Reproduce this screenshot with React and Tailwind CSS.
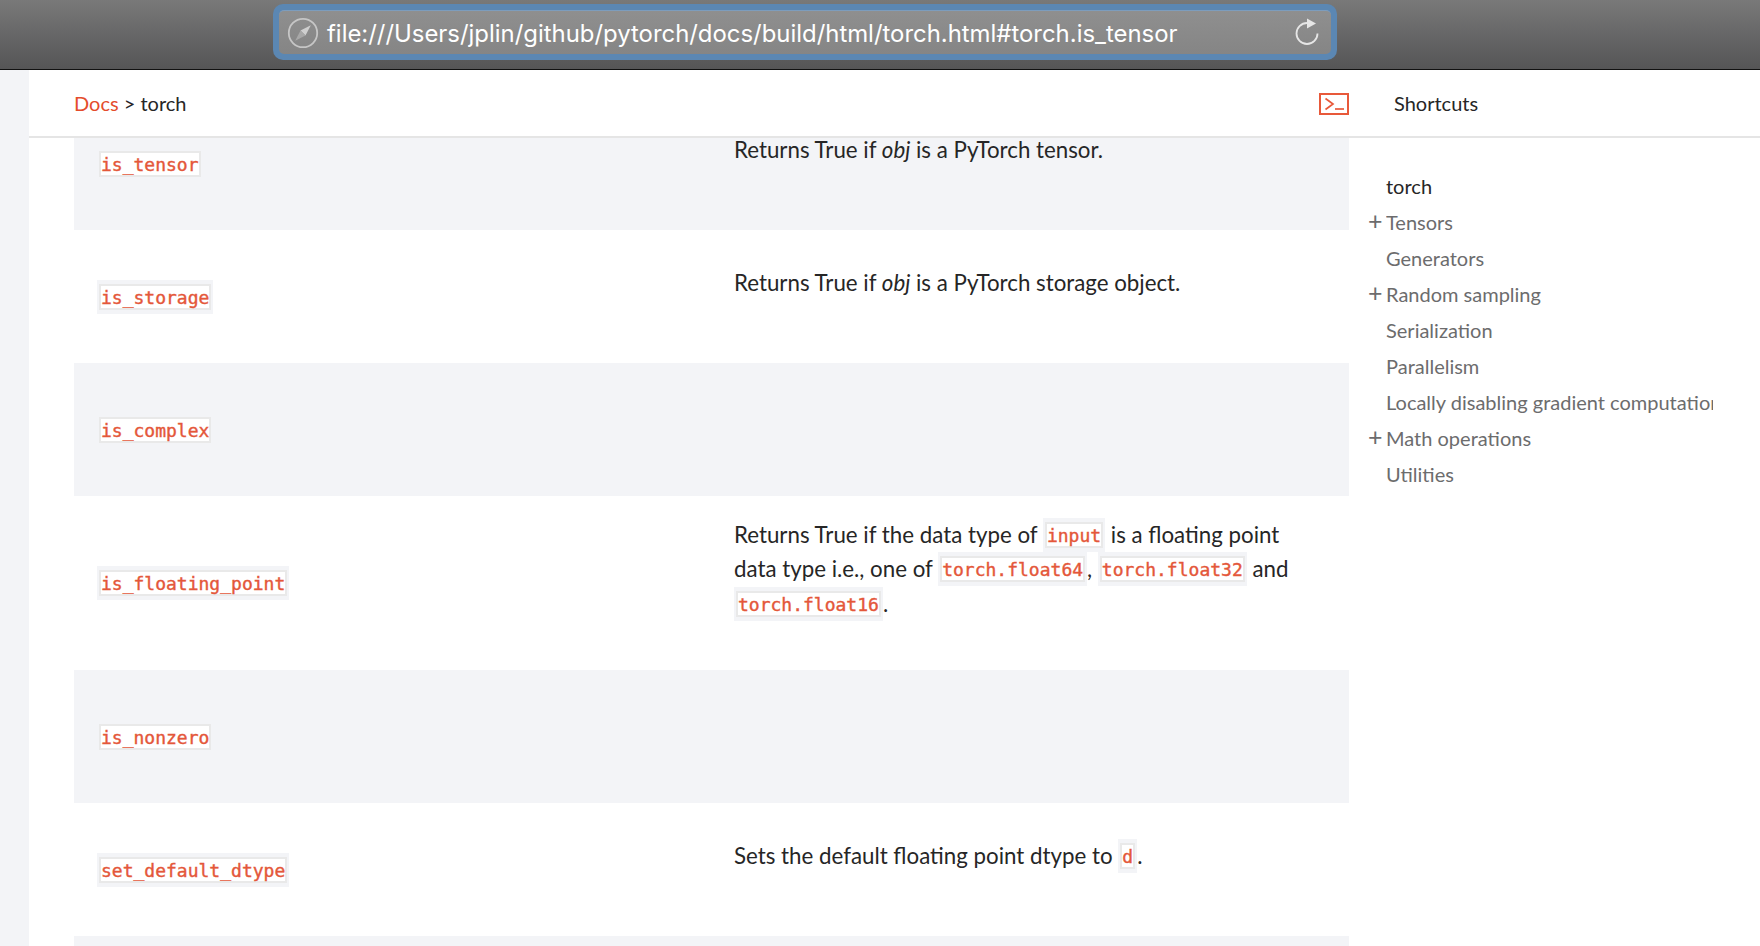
const rows = [
  { name: 'is_tensor', first: true, desc: <>Returns True if <em>obj</em> is a PyTorch tensor.</> },
  { name: 'is_storage', desc: <>Returns True if <em>obj</em> is a PyTorch storage object.</> },
  { name: 'is_complex' },
  {
    name: 'is_floating_point',
    desc: (
      <>
        Returns True if the data type of <Code>input</Code> is a floating point
        <br />
        data type i.e., one of <Code>torch.float64</Code>, <Code>torch.float32</Code> and
        <br />
        <Code>torch.float16</Code>.
      </>
    ),
  },
  { name: 'is_nonzero' },
  { name: 'set_default_dtype', desc: <>Sets the default floating point dtype to <Code>d</Code>.</> },
];

const navItems = [
  { label: 'Tensors', plus: true },
  { label: 'Generators' },
  { label: 'Random sampling', plus: true },
  { label: 'Serialization' },
  { label: 'Parallelism' },
  { label: 'Locally disabling gradient computation' },
  { label: 'Math operations', plus: true },
  { label: 'Utilities' },
];

function Code({ children }) {
  return (
    <span className="inline-block align-top h-[34px] bg-[#f3f4f7] px-[2px] py-[4px] font-['DejaVu_Sans_Mono',monospace] text-[18px] text-[#e4573a] [-webkit-text-stroke:0.4px_#e4573a]">
      <span className="block h-[26px] border-2 border-[#e9e9e9] bg-white leading-[23px] whitespace-pre">{children}</span>
    </span>
  );
}

function Compass() {
  return (
    <svg width="32" height="32" viewBox="0 0 32 32" fill="none">
      <circle cx="16" cy="16" r="14.2" stroke="#c6c6c6" strokeWidth="1.8" />
      <path d="M23.8 8.2 L18.5 18.5 L13.5 13.5 Z" fill="#cfcfcf" />
      <path d="M8.2 23.8 L13.5 13.5 L18.5 18.5 Z" fill="#a8a8a8" />
    </svg>
  );
}

function Reload() {
  return (
    <svg width="26" height="30" viewBox="0 0 26 30" fill="none" className="mb-[6px]">
      <path d="M13 8 A10.5 10.5 0 1 0 23.5 18.5" stroke="#e6e6e6" strokeWidth="1.8" />
      <path d="M13 3.5 L22 8.5 L13 13.5 Z" fill="#e6e6e6" />
    </svg>
  );
}

function TerminalIcon() {
  return (
    <svg width="30" height="22" viewBox="0 0 30 22" fill="none" className="mt-[2px]">
      <rect x="1" y="1" width="28" height="20" stroke="#e8593a" strokeWidth="2" />
      <path d="M6.5 5.5 L14 11 L6.5 16.5" stroke="#e8593a" strokeWidth="1.7" />
      <path d="M16 16 H25" stroke="#e8593a" strokeWidth="1.7" />
    </svg>
  );
}

export default function App() {
  return (
    <div className="h-screen overflow-hidden bg-white font-[Lato,sans-serif] text-[20px] text-[#262626] flex flex-col">
      <div className="h-[70px] shrink-0 bg-gradient-to-b from-[#797979] to-[#555556] border-b border-[#111] pt-[4px] pl-[273px]">
        <div className="w-[1064px] h-[56px] rounded-[10px] bg-[#5b87b3] p-[6px]">
          <div className="h-[44px] rounded-[5px] bg-gradient-to-b from-[#8f8f8f] to-[#858585] border-t border-[#7d9dbd] flex items-center pl-[8px] pr-[11px]">
            <Compass />
            <span className="ml-[8px] mt-[2px] flex-1 font-[Inter,sans-serif] text-[23.9px] text-white whitespace-nowrap">file:///Users/jplin/github/pytorch/docs/build/html/torch.html#torch.is_tensor</span>
            <Reload />
          </div>
        </div>
      </div>

      <div className="flex-1 min-h-0 flex">
        <div className="w-[29px] shrink-0 bg-[#f3f4f7]" />
        <div className="flex-1 min-w-0 flex flex-col">
          <div className="h-[68px] shrink-0 border-b-2 border-[#e5e5e5] flex items-center pl-[45px]">
            <div className="w-[1245px]">
              <span className="text-[#e44c2c]">Docs</span> &gt; torch
            </div>
            <TerminalIcon />
            <span className="ml-[45px]">Shortcuts</span>
          </div>

          <div className="flex-1 min-h-0 flex overflow-hidden">
            <div className="ml-[45px] w-[1275px] shrink-0">
              {rows.map((row, i) => (
                <div
                  key={row.name}
                  className={`flex items-center min-h-[133px] py-[22px] ${i % 2 === 0 ? 'bg-[#f3f4f7]' : 'bg-white'} ${row.first ? '-mt-[41px]' : ''}`}
                >
                  <div className="w-[660px] shrink-0 pl-[23px] flex">
                    <Code>{row.name}</Code>
                  </div>
                  {row.desc && <p className="mb-[27px] text-[22.3px] leading-[34.4px] whitespace-nowrap">{row.desc}</p>}
                </div>
              ))}
              <div className="h-[40px] bg-[#f3f4f7]" />
            </div>

            <div className="flex-1 min-w-0 pt-[30px] pl-[20px]">
              <div className="h-[36px] leading-[36px] pl-[17px] text-[#262626]">torch</div>
              {navItems.map((item) => (
                <div key={item.label} className="relative h-[36px] leading-[36px] pl-[17px] pr-[47px] text-[#6c6c6d]">
                  {item.plus && <span className="absolute left-[-1px] top-[-2px] text-[25px] text-[#6c6c6d]">+</span>}
                  <div className="overflow-hidden whitespace-nowrap">{item.label}</div>
                </div>
              ))}
            </div>
          </div>
        </div>
      </div>
    </div>
  );
}
